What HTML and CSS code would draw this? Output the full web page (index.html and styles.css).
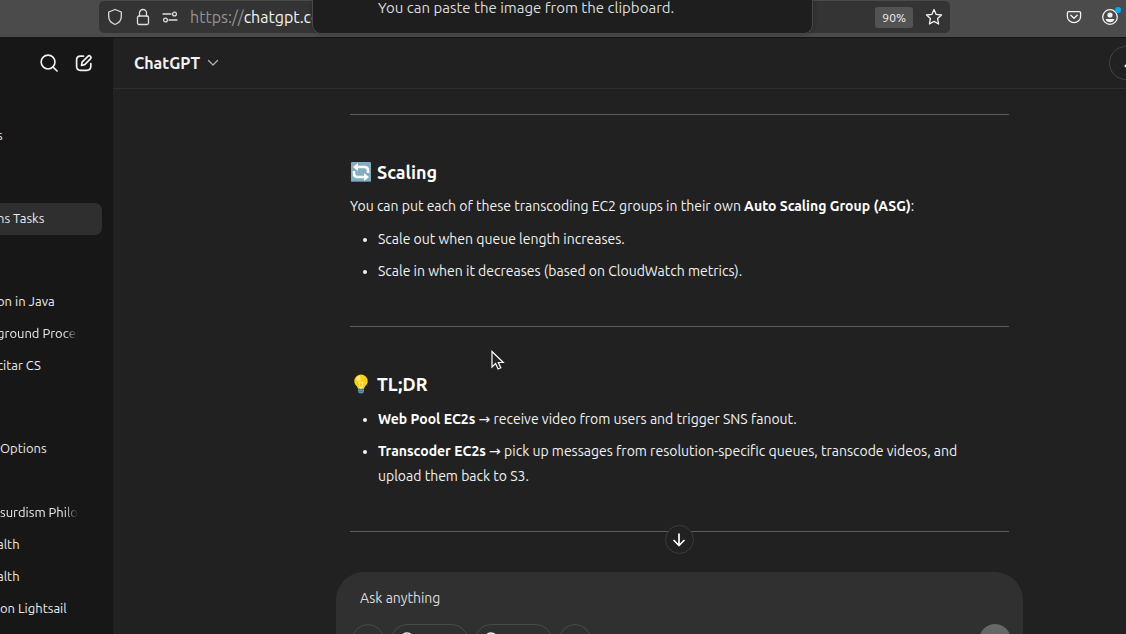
FILE: index.html
```html
<!DOCTYPE html>
<html lang="en">
<head>
<meta charset="utf-8">
<title>ChatGPT</title>
<link rel="stylesheet" href="styles.css">
</head>
<body>
<div class="toolbar">
  <div class="urlbar">
    <svg class="icon" width="16" height="18" viewBox="0 0 16 18"><path d="M8 1.500 14.300 4v4.500c0 3.500-2.600 6.600-6.300 8-3.700-1.400-6.300-4.500-6.300-8V4z"/></svg>
    <svg class="icon" width="14" height="18" viewBox="0 0 14 18"><rect x="1.500" y="8" width="11" height="8.500" rx="1.500"/><path d="M3.500 8V5a3.500 3.500 0 0 1 7 0v3"/></svg>
    <svg class="icon" width="16" height="12" viewBox="0 0 16 12"><path d="M1 3h8M7 9h8"/><circle cx="12.500" cy="3" r="1.900"/><circle cx="3.500" cy="9" r="1.900"/></svg>
    <span class="url"><span class="scheme">https://</span>chatgpt.com</span>
    <button class="zoom-level">90%</button>
    <button class="bare" aria-label="Bookmark this page"><svg class="icon" width="18" height="18" viewBox="0 0 18 18"><path d="m9 1.500 2.200 4.900 5.300.6-3.900 3.600 1 5.400L9 13.400 4.400 16l1-5.400L1.500 7l5.300-.6z"/></svg></button>
  </div>
  <div class="toolbar-actions">
    <button class="bare" aria-label="Save to Pocket"><svg class="icon" width="16" height="16" viewBox="0 0 16 16"><path d="M2.600 2.700h10.800q1.200 0 1.200 1.200v3.500a6.600 6.200 0 0 1-13.200 0V3.900q0-1.200 1.200-1.200zM4.800 6.300 8 9.300l3.200-3"/></svg></button>
    <button class="bare" aria-label="Account"><svg class="icon" width="18" height="18" viewBox="0 0 18 18"><circle cx="9" cy="9" r="7.300"/><circle class="solid" cx="9" cy="7" r="2.600"/><path class="solid" d="M4.500 11h9q-1 3.300-4.500 3.300T4.500 11z"/></svg><span class="dot"></span></button>
  </div>
  <div class="notice">You can paste the image from the clipboard.</div>
</div>

<div class="app">
  <nav class="sidebar">
    <div class="sidebar-tools">
      <button class="bare" aria-label="Search chats"><svg class="icon thick" width="18" height="18" viewBox="0 0 19 19"><circle cx="8.500" cy="8.500" r="7.300"/><path d="m13.800 13.800 4.200 4.200"/></svg></button>
      <button class="bare" aria-label="New chat"><svg class="icon thick" width="18" height="18" viewBox="0 0 18 18"><path d="M8.500 2.200H5.500Q1.600 2.200 1.600 6v6.300q0 4 3.900 4h6.300q4 0 4-4V9.500"/><path d="m6.500 11.500.6-3.400 5.800-5.800q1.300-1.200 2.500 0t0 2.500L9.700 10.600z"/></svg></button>
    </div>
    <div class="group"><a href="#" class="cut">s</a></div>
    <div class="group"><a href="#" class="cut active">ns Tasks</a></div>
    <div class="group">
      <a href="#" class="cut">on in Java</a>
      <a href="#" class="cut"><span class="fade">ground Proces</span></a>
      <a href="#" class="cut">citar CS</a>
    </div>
    <div class="group"><a href="#">Options</a></div>
    <div class="group near">
      <a href="#"><span class="fade">surdism Philo</span></a>
      <a href="#" class="cut">alth</a>
      <a href="#" class="cut">alth</a>
      <a href="#">on Lightsail</a>
    </div>
  </nav>

  <main class="main">
    <header class="header">
      <button class="model">ChatGPT <svg class="icon" width="12" height="8" viewBox="0 0 12 8"><path d="m1.500 1.500 4.500 4.500 4.500-4.500"/></svg></button>
      <button class="round-tool" aria-label="Temporary chat"><svg width="6" height="10" viewBox="0 0 6 10"><path d="M0 8q2-.5 2.500-4H6v6Q2 10 0 8z" fill="#fff"/></svg></button>
    </header>

    <article class="thread">
      <hr>
      <h3><svg width="22" height="22" viewBox="0 0 22 22"><rect x="1" y="1" width="20" height="20" rx="1" fill="#82aec0"/><path d="M1 20h20v1H1z" fill="#4f8199"/><g fill="none" stroke="#fff" stroke-width="2.600"><path d="M6 6h8.500q3.500 0 3.500 3.500V12"/><path d="M16 16H7.500Q4 16 4 12.500V10"/></g><path d="M8 2v8L3 6zM14 12v8l5-4z" fill="#fff"/></svg>Scaling</h3>
      <p>You can put each of these transcoding EC2 groups in their own <strong>Auto Scaling Group (ASG)</strong>:</p>
      <ul>
        <li>Scale out when queue length increases.</li>
        <li>Scale in when it decreases (based on CloudWatch metrics).</li>
      </ul>
      <hr>
      <h3><svg width="22" height="22" viewBox="0 0 22 22"><path d="M8 14h6v4q0 2.500-3 2.500T8 18z" fill="#5597b2"/><path d="M8 16.500h6M8 18.500h5" stroke="#36738c" stroke-width=".8"/><path d="M11 1.500a6.700 6.700 0 0 0-6.700 6.800c0 3.500 3.200 4.600 3.500 7.200h6.400c.3-2.600 3.500-3.700 3.500-7.200A6.700 6.700 0 0 0 11 1.500z" fill="#fdd20c"/><path d="m9 9 1 6h2l1-6-2 1z" fill="none" stroke="#fff3a0" stroke-width=".9"/><ellipse cx="8.500" cy="5.500" rx="2" ry="2.500" fill="#fff17a"/></svg>TL;DR</h3>
      <ul>
        <li><strong>Web Pool EC2s</strong> → receive video from users and trigger SNS fanout.</li>
        <li><strong>Transcoder EC2s</strong> → pick up messages from resolution-specific queues, transcode videos, and upload them back to S3.</li>
      </ul>
      <hr>
    </article>

    <form class="composer">
      <button type="button" class="to-bottom" aria-label="Scroll to bottom"><svg class="icon thick" width="14" height="14" viewBox="0 0 14 14"><path d="M7 1v11.500M2 7.500l5 5 5-5"/></svg></button>
      <input class="prompt" type="text" placeholder="Ask anything" aria-label="Ask anything">
      <div class="composer-tools">
        <button type="button" class="chip" aria-label="Add files"></button>
        <button type="button" class="chip wide" aria-label="Search the web"><svg class="icon" width="16" height="16" viewBox="0 0 16 16"><circle cx="8" cy="8" r="7"/></svg></button>
        <button type="button" class="chip wide" aria-label="Reason"><svg class="icon thick" width="16" height="16" viewBox="0 0 16 16"><circle cx="8" cy="7" r="6"/></svg></button>
        <button type="button" class="chip" aria-label="More tools"></button>
        <button class="send" aria-label="Send"></button>
      </div>
    </form>
  </main>
</div>

<svg class="cursor" width="14" height="21" viewBox="0 0 14 21"><path d="M1 1.500v15.500l3.600-3.400 2.500 5.400 2.700-1.200-2.500-5.300h5z" fill="#222" stroke="#fff" stroke-width="1.200"/></svg>
</body>
</html>
```
FILE: styles.css
```css
* { box-sizing: border-box; }

body {
  margin: 0;
  height: 100vh;
  display: flex;
  flex-direction: column;
  overflow: hidden;
  position: relative;
  background: #212121;
  color: #f2f2f2;
  font: 14px/25px Ubuntu, "DejaVu Sans", sans-serif;
}

button {
  font: inherit;
  color: inherit;
  background: none;
  border: 0;
  padding: 0;
  display: flex;
  align-items: center;
}

.icon { fill: none; stroke: currentColor; stroke-width: 1.3; stroke-linecap: round; stroke-linejoin: round; flex: none; }
.thick { stroke-width: 1.7; }
.solid { fill: currentColor; stroke: none; }
.bare { position: relative; }

.toolbar {
  flex: none;
  height: 38px;
  position: relative;
  display: flex;
  justify-content: space-between;
  padding: 1px 7px 4px 99px;
  background: #4b4b4b;
  border-bottom: 1px solid #161616;
}
.urlbar {
  flex: 0 1 851px;
  display: flex;
  align-items: center;
  gap: 12px;
  padding: 0 7px 0 8px;
  border-radius: 5px;
  background: #343434;
}
.url { flex: 1; font-size: 16px; color: #f4f4f4; }
.urlbar > .icon { color: #ddd; }
.urlbar > .icon:nth-child(2) { margin-left: 1px; }
.scheme { color: #929292; }
.zoom-level {
  height: 21px;
  padding: 0 7px;
  border-radius: 3px;
  background: #535353;
  font-size: 12px;
}
.toolbar-actions { display: flex; gap: 19px; }
.dot {
  position: absolute;
  top: 6px;
  right: -2px;
  width: 6px;
  height: 6px;
  border-radius: 50%;
  background: #00adfa;
}
.notice {
  position: absolute;
  top: 0;
  left: 312px;
  width: 501px;
  height: 34px;
  padding: 0 65px;
  font-size: 15px;
  line-height: 16px;
  border: 1px solid #484848;
  border-top: 0;
  border-radius: 0 0 9px 9px;
  background: #1e1e1e;
  box-shadow: 0 0 5px #0004;
  color: #ddd;
}

/* The window runs past the right edge of the viewport. */
.app {
  flex: 1;
  min-height: 0;
  width: calc(100% + 120px);
  display: flex;
  overflow: hidden;
}

.sidebar { flex: none; width: 113px; background: #171717; overflow: hidden; }
.sidebar-tools {
  height: 50px;
  display: flex;
  align-items: center;
  justify-content: flex-end;
  gap: 17px;
  padding-right: 20px;
}
.group { padding-top: 51px; }
.group:nth-child(2) { padding-top: 32px; }
.near { padding-top: 32px; }
.sidebar a {
  display: block;
  height: 32px;
  margin-right: 11px;
  border-radius: 0 7px 7px 0;
  font-size: 13px;
  line-height: 31px;
  white-space: nowrap;
  color: #ececec;
  text-decoration: none;
}
.sidebar .active { background: #2f2f2f; }
/* Titles whose first letter is partly scrolled out of view. */
.sidebar .cut { text-indent: -3px; }
.fade {
  display: block;
  width: 84px;
  mask-image: linear-gradient(to left, transparent 6px, #000 20px);
}

.main { flex: 1; min-width: 0; }
.header {
  height: 51px;
  display: flex;
  align-items: center;
  justify-content: space-between;
  padding: 0 103px 0 21px;
  border-bottom: 1px solid #2e2e2e;
}
.model { gap: 7px; font-size: 16px; font-weight: 700; }
.model .icon { color: #b0b0b0; }
.round-tool {
  width: 34px;
  height: 34px;
  padding-left: 14px;
  border: 1px solid #444;
  border-radius: 50%;
}

.thread { max-width: 659px; margin: 0 auto; padding: 25px 0 40px; }
hr { height: 1px; margin: 0; border: 0; background: #5c5c5c; }
h3 {
  display: flex;
  align-items: center;
  gap: 5px;
  margin: 43px 0 8px;
  font-size: 18px;
  line-height: 28px;
  color: #fff;
}
p { margin: 0; }
strong { color: #fff; }
ul {
  display: grid;
  gap: 7px;
  margin: 8px 0 42px;
  padding: 0 20px 0 28px;
}
h3 + ul { margin-top: 9px; }

.composer {
  position: relative;
  max-width: 687px;
  height: 110px;
  margin: 0 auto;
  padding: 12px 12px 0 16px;
  border-radius: 28px;
  background: #303030;
}
.to-bottom {
  position: absolute;
  top: -47px;
  left: calc(50% - 15px);
  width: 29px;
  height: 29px;
  justify-content: center;
  border: 1px solid #3c3c3c;
  border-radius: 50%;
  background: #212121;
  color: #fff;
}
.prompt {
  display: block;
  width: 100%;
  height: 28px;
  margin-bottom: 12px;
  padding: 0 8px;
  border: 0;
  outline: 0;
  background: none;
  color: inherit;
  font: inherit;
}
.prompt::placeholder { color: #ddd; opacity: 1; }
.composer-tools { display: flex; gap: 7px; }
.chip { width: 32px; height: 32px; border: 1px solid #4a4a4a; border-radius: 16px; }
.wide { width: 77px; padding-left: 7px; }
.send { width: 32px; height: 32px; margin-left: auto; border-radius: 50%; background: #676767; }

.cursor { position: absolute; left: 491px; top: 350px; }
```
